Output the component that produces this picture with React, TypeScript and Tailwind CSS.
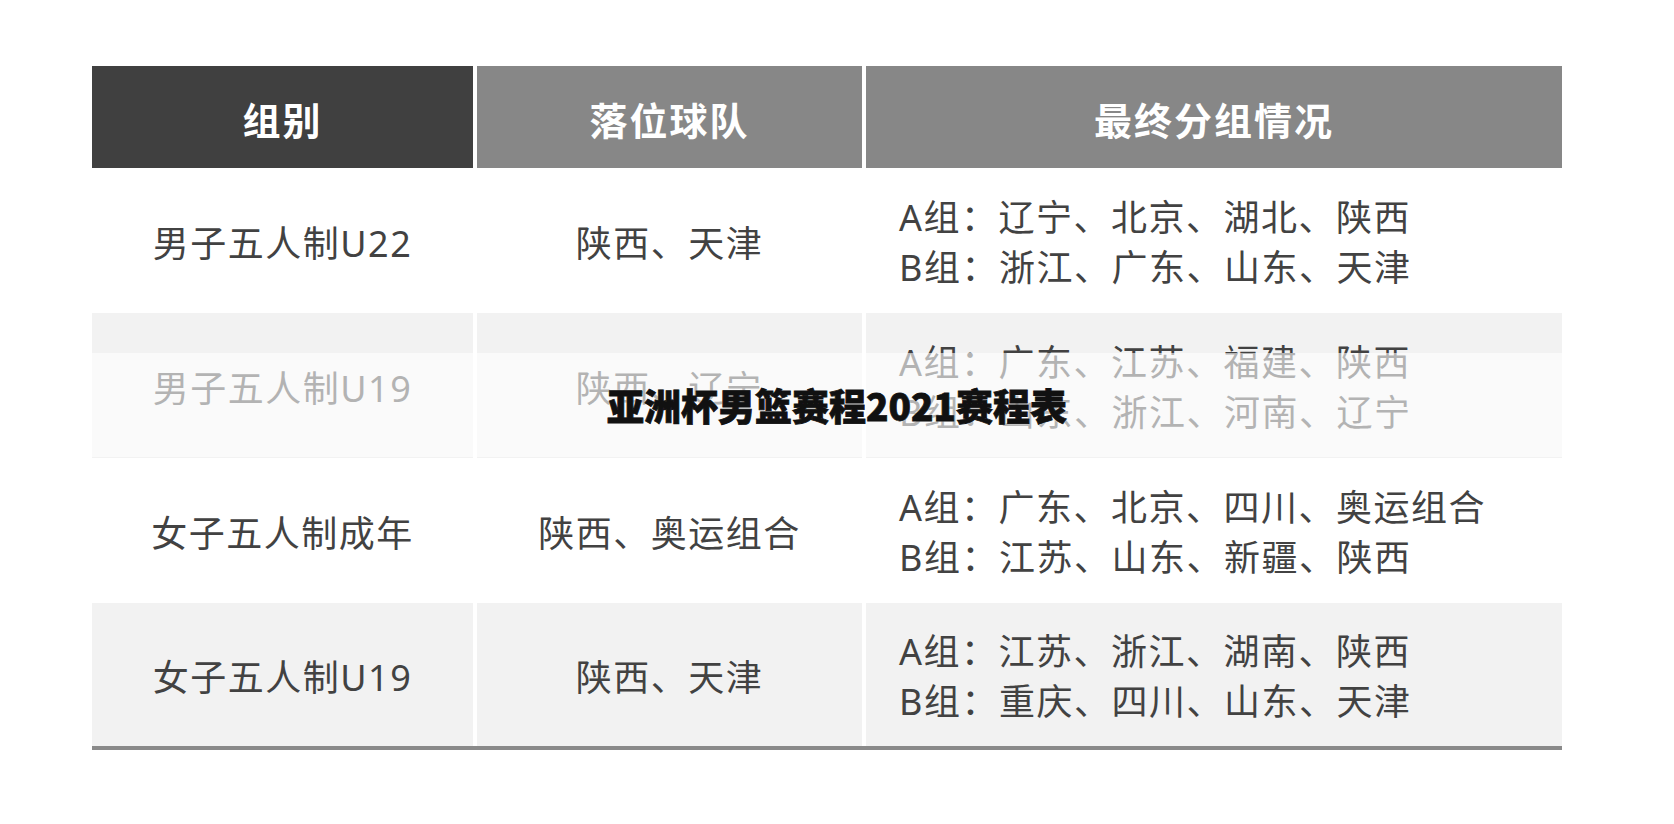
import React from "react";

type Row = { group: string; teams: string; a: string; b: string; gray: boolean };

const rows: Row[] = [
  { group: "男子五人制U22", teams: "陕西、天津", a: "A组：辽宁、北京、湖北、陕西", b: "B组：浙江、广东、山东、天津", gray: false },
  { group: "男子五人制U19", teams: "陕西、辽宁", a: "A组：广东、江苏、福建、陕西", b: "B组：山东、浙江、河南、辽宁", gray: true },
  { group: "女子五人制成年", teams: "陕西、奥运组合", a: "A组：广东、北京、四川、奥运组合", b: "B组：江苏、山东、新疆、陕西", gray: false },
  { group: "女子五人制U19", teams: "陕西、天津", a: "A组：江苏、浙江、湖南、陕西", b: "B组：重庆、四川、山东、天津", gray: true },
];

export default function App() {
  return (
    <div className="relative w-[1674px] h-[824px] bg-white overflow-hidden font-['Noto_Sans','Noto_Sans_CJK_SC',sans-serif]">
      <div className="pt-[66px] pl-[92px]">
        <div className="w-[1470px]">
          <div className="grid grid-cols-[381px_385px_696px] gap-x-[4px] h-[102px] text-white font-bold text-[38px] tracking-[2px]">
            <div className="bg-[#404040] flex items-center justify-center pt-[6px]">组别</div>
            <div className="bg-[#878787] flex items-center justify-center pt-[6px]">落位球队</div>
            <div className="bg-[#878787] flex items-center justify-center pt-[6px]">最终分组情况</div>
          </div>
          {rows.map((r, i) => (
            <div
              key={i}
              className={
                "grid grid-cols-[381px_385px_696px] gap-x-[4px] text-[36px] tracking-[1.5px] text-[#424242] " +
                (i === 3 ? "h-[143px]" : "h-[145px]")
              }
            >
              <div className={(r.gray ? "bg-[#f2f2f2] " : "bg-white ") + "flex items-center justify-center pt-[6px]"}>
                {r.group}
              </div>
              <div className={(r.gray ? "bg-[#f2f2f2] " : "bg-white ") + "flex items-center justify-center pt-[6px]"}>
                {r.teams}
              </div>
              <div
                className={
                  (r.gray ? "bg-[#f2f2f2] " : "bg-white ") +
                  "flex flex-col justify-center pl-[33px] pt-[4px] leading-[50px]"
                }
              >
                <div>{r.a}</div>
                <div>{r.b}</div>
              </div>
            </div>
          ))}
          <div className="h-[4px] bg-[#8a8a8a]" />
        </div>
      </div>

      <div className="absolute left-[92px] top-[353px] w-[1470px] h-[104px] bg-white/60" />
      <div className="absolute left-0 right-0 top-[353px] h-[104px] flex items-center justify-center">
        <span className="text-[37px] font-black text-[#111111] leading-none font-['Noto_Sans_CJK_SC',sans-serif] [-webkit-text-stroke:0.8px_#111111] [text-shadow:0_0_2px_#ffffff]">
          亚洲杯男篮赛程2021赛程表
        </span>
      </div>
    </div>
  );
}
